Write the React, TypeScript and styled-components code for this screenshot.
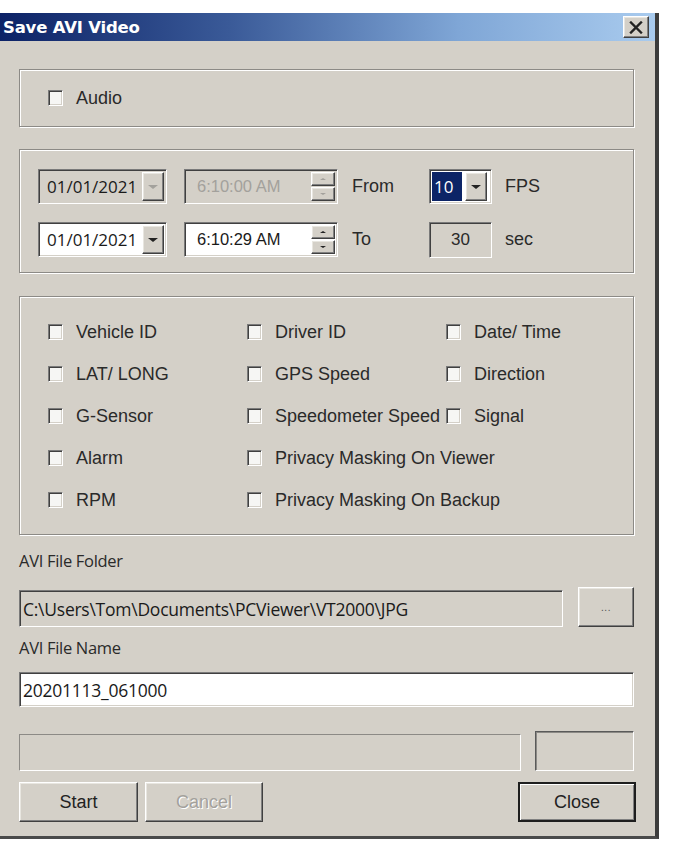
import React from 'react';
import styled, { createGlobalStyle, css } from 'styled-components';

const Global = createGlobalStyle`
  html, body { margin: 0; padding: 0; background: #ffffff; }
  body { font-family: "Liberation Sans", Arial, sans-serif; color: #1a1a1a; }
  * { box-sizing: border-box; }
`;

const sunken = css`
  border: 1px solid;
  border-color: #7a7a7a #ffffff #ffffff #7a7a7a;
  box-shadow: inset 1px 1px 0 #404040, inset -1px -1px 0 #d4d0c8;
`;

const raised = css`
  border: 1px solid;
  border-color: #ffffff #404040 #404040 #ffffff;
  box-shadow: inset -1px -1px 0 #808080, inset 1px 1px 0 #e8e6e0;
  background: #d4d0c8;
`;

const Page = styled.div`
  padding-top: 13px;
`;

const Window = styled.div`
  width: 659px;
  background: #d4d0c8;
  border-right: 4px solid #3c3c3c;
  border-bottom: 3px solid #4a4a4a;
  display: flex;
  flex-direction: column;
`;

const TitleBar = styled.div`
  height: 28px;
  background: linear-gradient(to right, #0c2266 0%, #3a5a98 35%, #7fa6d6 70%, #a9cbee 100%);
  display: flex;
  align-items: center;
  justify-content: space-between;
  padding: 0 6px 0 3px;
`;

const Title = styled.span`
  color: #ffffff;
  font-family: "DejaVu Sans", Verdana, sans-serif;
  font-weight: bold;
  font-size: 16.5px;
  letter-spacing: -0.2px;
`;

const CloseBox = styled.div`
  ${raised};
  width: 26px;
  height: 22px;
  display: flex;
  align-items: center;
  justify-content: center;
`;

const Body = styled.div`
  display: flex;
  flex-direction: column;
  padding: 28px 21px 14px 19px;
`;

const Group = styled.div<{ $mt?: number }>`
  border: 1px solid #8c8a86;
  box-shadow: inset 1px 1px 0 #ffffff, 1px 1px 0 #ffffff;
  margin-top: ${(p) => p.$mt ?? 0}px;
`;

const AudioGroup = styled(Group)`
  height: 58px;
  display: flex;
  align-items: center;
  padding: 0 28px;
`;

const DateGroup = styled(Group)`
  padding: 19px 0 15px 18px;
  display: grid;
  grid-template-columns: 146px 168px 77px 76px auto;
  grid-auto-rows: 35px;
  row-gap: 18px;
  align-items: center;
`;

const CheckGroup = styled(Group)`
  padding: 14px 0 13px 28px;
  display: grid;
  grid-template-columns: 199px 199px auto;
  grid-auto-rows: 42px;
  align-items: center;
`;

const CheckItem = styled.label<{ $span?: number }>`
  display: flex;
  align-items: center;
  gap: 13px;
  font-size: 18px;
  color: #2a2a2a;
  white-space: nowrap;
  grid-column: span ${(p) => p.$span ?? 1};
`;

const Box = styled.span`
  ${sunken};
  width: 15px;
  height: 16px;
  background: #f6f6f4;
  flex: none;
`;

const Combo = styled.div<{ $disabled?: boolean; $w: number }>`
  ${sunken};
  width: ${(p) => p.$w}px;
  height: 35px;
  background: ${(p) => (p.$disabled ? '#d4d0c8' : '#ffffff')};
  display: flex;
  align-items: stretch;
  padding: 2px;
`;

const FieldText = styled.span<{ $disabled?: boolean; $font?: 'open' | 'lib'; $pl?: number }>`
  flex: 1;
  display: flex;
  align-items: center;
  padding-left: ${(p) => p.$pl ?? 6}px;
  font-family: ${(p) => (p.$font === 'lib' ? '"Liberation Sans", Arial, sans-serif' : '"Open Sans", "Liberation Sans", sans-serif')};
  font-size: ${(p) => (p.$font === 'lib' ? '16.5px' : '17px')};
  color: ${(p) => (p.$disabled ? '#a3a19c' : '#1a1a1a')};
  white-space: nowrap;
`;

const DropBtn = styled.div<{ $w?: number }>`
  ${raised};
  width: ${(p) => p.$w ?? 22}px;
  display: flex;
  align-items: center;
  justify-content: center;
`;

const Tri = styled.span<{ $disabled?: boolean; $up?: boolean; $size?: number }>`
  width: 0;
  height: 0;
  border-left: ${(p) => p.$size ?? 5}px solid transparent;
  border-right: ${(p) => p.$size ?? 5}px solid transparent;
  ${(p) =>
    p.$up
      ? `border-bottom: ${(p.$size ?? 5) - 1}px solid ${p.$disabled ? '#a3a19c' : '#222'};`
      : `border-top: ${(p.$size ?? 5) - 1}px solid ${p.$disabled ? '#a3a19c' : '#222'};`}
`;

const Spin = styled.div`
  width: 24px;
  display: flex;
  flex-direction: column;
  gap: 1px;
`;

const SpinBtn = styled.div`
  ${raised};
  flex: 1;
  display: flex;
  align-items: center;
  justify-content: center;
`;

const Selected = styled.span`
  background: #0c2466;
  color: #ffffff;
  font-family: "Open Sans", "Liberation Sans", sans-serif;
  font-size: 17px;
  width: 30px;
  margin-right: 3px;
  display: flex;
  align-items: center;
  padding-left: 2px;
`;

const Label = styled.span`
  font-size: 18px;
  color: #2a2a2a;
`;

const ValueBox = styled.div`
  ${sunken};
  width: 63px;
  height: 36px;
  background: #d4d0c8;
  display: flex;
  align-items: center;
  justify-content: center;
  font-size: 17px;
  color: #2a2a2a;
`;

const FieldLabel = styled.div<{ $mt: number }>`
  margin-top: ${(p) => p.$mt}px;
  font-family: "Open Sans", "Liberation Sans", sans-serif;
  font-size: 16.5px;
  line-height: 22px;
  color: #2a2a2a;
  letter-spacing: -0.3px;
`;

const Row = styled.div<{ $mt: number }>`
  display: flex;
  align-items: flex-end;
  justify-content: space-between;
  margin-top: ${(p) => p.$mt}px;
`;

const TextField = styled.div<{ $w?: number; $h: number; $bg: string }>`
  ${sunken};
  width: ${(p) => (p.$w ? `${p.$w}px` : '100%')};
  height: ${(p) => p.$h}px;
  background: ${(p) => p.$bg};
  display: flex;
  align-items: center;
  padding-left: 3px;
  font-family: "Open Sans", "Liberation Sans", sans-serif;
  font-size: 17.5px;
  color: #1a1a1a;
  white-space: nowrap;
  letter-spacing: -0.25px;
`;

const DotsBtn = styled.div`
  ${raised};
  width: 56px;
  height: 40px;
  display: flex;
  align-items: center;
  justify-content: center;
  font-size: 10px;
  color: #505050;
  letter-spacing: 0.5px;
`;

const Progress = styled.div`
  width: 502px;
  height: 37px;
  border: 1px solid;
  border-color: #8c8a86 #ffffff #ffffff #8c8a86;
  background: #d4d0c8;
`;

const StatusBox = styled.div`
  width: 99px;
  height: 40px;
  border: 1px solid;
  border-color: #5a5a5a #ffffff #ffffff #5a5a5a;
  box-shadow: inset 1px 1px 0 #8c8a86;
`;

const ButtonRow = styled.div`
  display: flex;
  align-items: center;
  margin-top: 11px;
  gap: 7px;
`;

const Button = styled.div<{ $disabled?: boolean; $default?: boolean; $w: number }>`
  ${raised};
  width: ${(p) => p.$w}px;
  height: 40px;
  display: flex;
  align-items: center;
  justify-content: center;
  font-size: 18px;
  color: ${(p) => (p.$disabled ? '#a3a19c' : '#222')};
  ${(p) => p.$disabled && 'text-shadow: 1px 1px 0 #ffffff;'}
  ${(p) =>
    p.$default &&
    css`
      border: 2px solid #1e1e1e;
      box-shadow: inset 1px 1px 0 #ffffff, inset -1px -1px 0 #808080;
      margin-left: auto;
      margin-right: -2px;
    `}
`;

const checks: { label: string; span?: number }[] = [
  { label: 'Vehicle ID' },
  { label: 'Driver ID' },
  { label: 'Date/ Time' },
  { label: 'LAT/ LONG' },
  { label: 'GPS Speed' },
  { label: 'Direction' },
  { label: 'G-Sensor' },
  { label: 'Speedometer Speed' },
  { label: 'Signal' },
  { label: 'Alarm' },
  { label: 'Privacy Masking On Viewer', span: 2 },
  { label: 'RPM' },
  { label: 'Privacy Masking On Backup', span: 2 },
];

const CloseIcon = () => (
  <svg width="14" height="13" viewBox="0 0 14 13">
    <path d="M2 1.5 L12 11.5 M12 1.5 L2 11.5" stroke="#222" strokeWidth="2.4" strokeLinecap="square" />
  </svg>
);

export default function App() {
  return (
    <Page>
      <Global />
      <Window>
        <TitleBar>
          <Title>Save AVI Video</Title>
          <CloseBox>
            <CloseIcon />
          </CloseBox>
        </TitleBar>
        <Body>
          <AudioGroup>
            <CheckItem>
              <Box />
              Audio
            </CheckItem>
          </AudioGroup>

          <DateGroup $mt={22}>
            <Combo $w={129} $disabled>
              <FieldText $pl={6}>01/01/2021</FieldText>
              <DropBtn>
                <Tri $disabled />
              </DropBtn>
            </Combo>
            <Combo $w={154} $disabled>
              <FieldText $font="lib" $pl={10} $disabled>
                6:10:00 AM
              </FieldText>
              <Spin>
                <SpinBtn>
                  <Tri $up $disabled $size={3} />
                </SpinBtn>
                <SpinBtn>
                  <Tri $disabled $size={3} />
                </SpinBtn>
              </Spin>
            </Combo>
            <Label>From</Label>
            <Combo $w={63}>
              <Selected>10</Selected>
              <DropBtn>
                <Tri />
              </DropBtn>
            </Combo>
            <Label>FPS</Label>

            <Combo $w={129}>
              <FieldText $pl={6}>01/01/2021</FieldText>
              <DropBtn>
                <Tri />
              </DropBtn>
            </Combo>
            <Combo $w={154}>
              <FieldText $font="lib" $pl={10}>
                6:10:29 AM
              </FieldText>
              <Spin>
                <SpinBtn>
                  <Tri $up $size={3} />
                </SpinBtn>
                <SpinBtn>
                  <Tri $size={3} />
                </SpinBtn>
              </Spin>
            </Combo>
            <Label>To</Label>
            <ValueBox>30</ValueBox>
            <Label>sec</Label>
          </DateGroup>

          <CheckGroup $mt={23}>
            {checks.map((c) => (
              <CheckItem key={c.label} $span={c.span}>
                <Box />
                {c.label}
              </CheckItem>
            ))}
          </CheckGroup>

          <FieldLabel $mt={15}>AVI File Folder</FieldLabel>
          <Row $mt={15}>
            <TextField $w={544} $h={37} $bg="#d4d0c8">
              C:\Users\Tom\Documents\PCViewer\VT2000\JPG
            </TextField>
            <DotsBtn>...</DotsBtn>
          </Row>

          <FieldLabel $mt={10}>AVI File Name</FieldLabel>
          <Row $mt={13}>
            <TextField $h={35} $bg="#ffffff">
              20201113_061000
            </TextField>
          </Row>

          <Row $mt={24}>
            <Progress />
            <StatusBox />
          </Row>

          <ButtonRow>
            <Button $w={119}>Start</Button>
            <Button $w={118} $disabled>
              Cancel
            </Button>
            <Button $w={118} $default>
              Close
            </Button>
          </ButtonRow>
        </Body>
      </Window>
    </Page>
  );
}
